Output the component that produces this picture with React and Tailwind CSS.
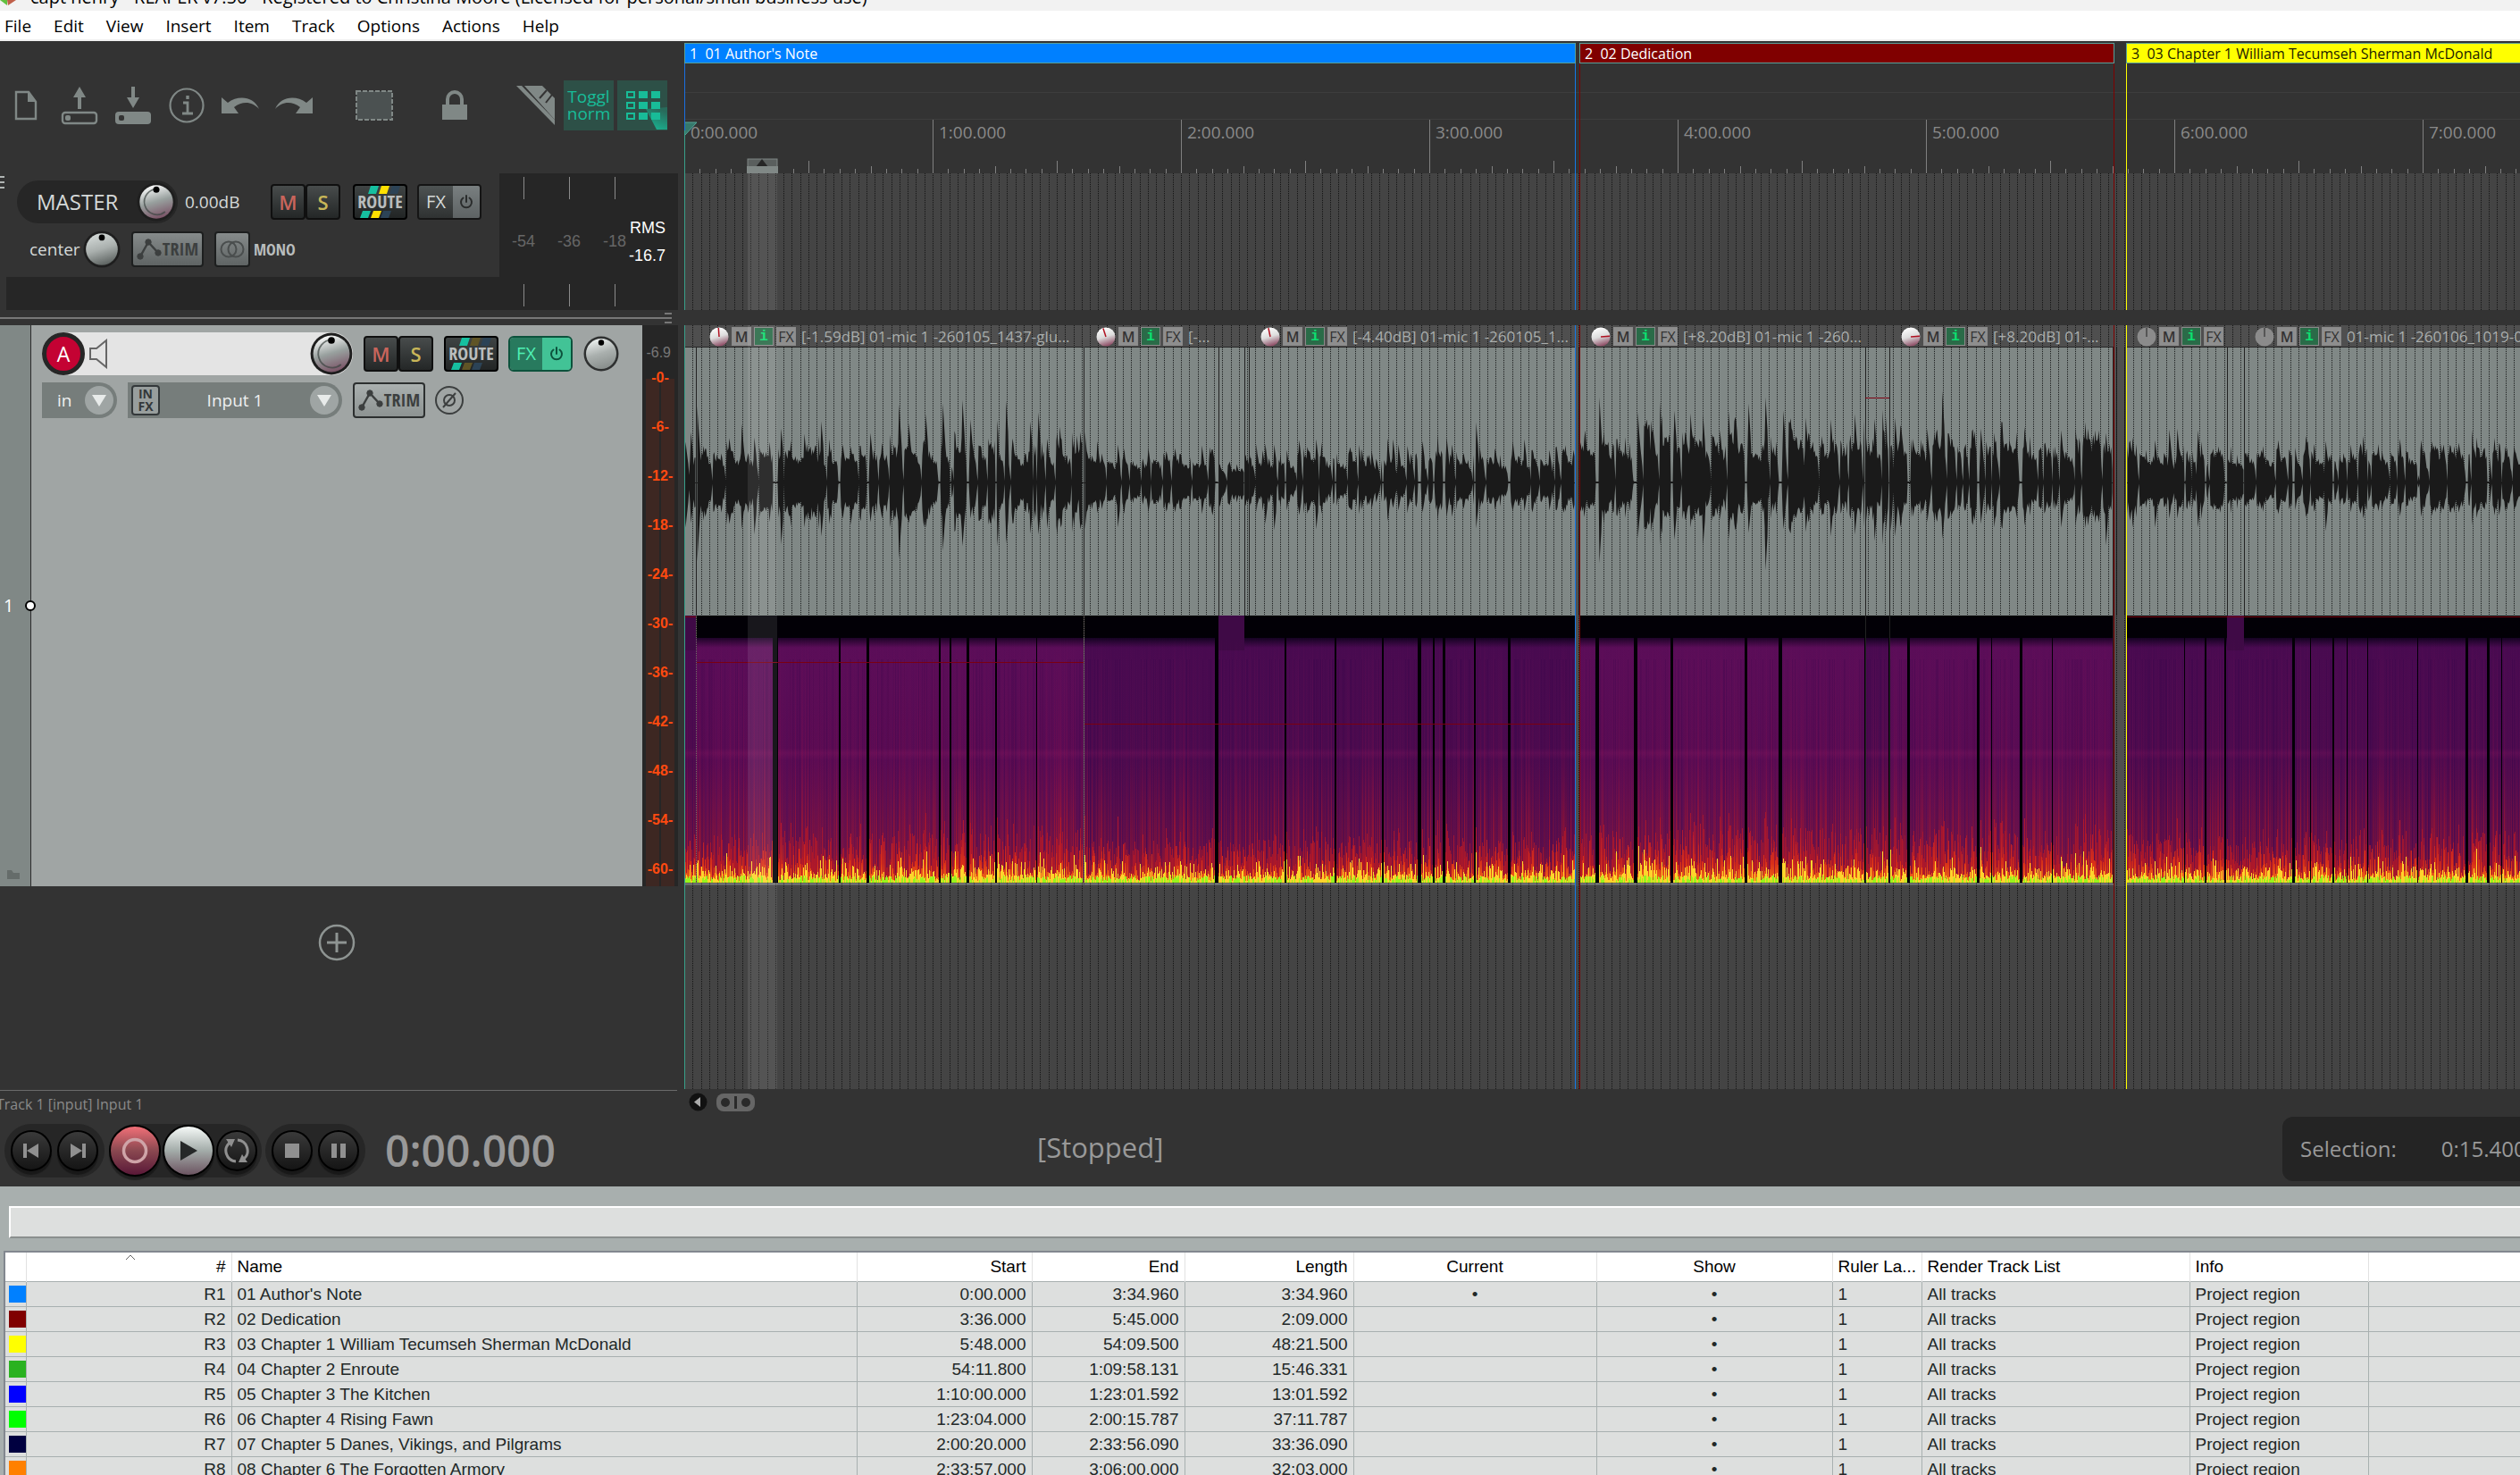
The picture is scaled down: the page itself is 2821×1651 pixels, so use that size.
import React, { useMemo } from 'react';

const UI_FONT = "font-['Open_Sans','Noto_Sans',sans-serif]";
const ARIAL_FONT = "font-['Liberation_Sans',Arial,sans-serif]";
const NARROW_FONT = "font-['Liberation_Sans_Narrow','Open_Sans_Condensed','DejaVu_Sans_Condensed',sans-serif]";

const PX_PER_MINUTE = 278;

const MENU = ['File', 'Edit', 'View', 'Insert', 'Item', 'Track', 'Options', 'Actions', 'Help'];

const REGIONS = [
    { id: 'R1', name: "01 Author's Note", start: '0:00.000', end: '3:34.960', length: '3:34.960', color: '#0080ff', current: true },
    { id: 'R2', name: '02 Dedication', start: '3:36.000', end: '5:45.000', length: '2:09.000', color: '#800000' },
    { id: 'R3', name: '03 Chapter 1 William Tecumseh Sherman McDonald', start: '5:48.000', end: '54:09.500', length: '48:21.500', color: '#ffff00' },
    { id: 'R4', name: '04 Chapter 2 Enroute', start: '54:11.800', end: '1:09:58.131', length: '15:46.331', color: '#2ab220' },
    { id: 'R5', name: '05 Chapter 3 The Kitchen', start: '1:10:00.000', end: '1:23:01.592', length: '13:01.592', color: '#0000ff' },
    { id: 'R6', name: '06 Chapter 4 Rising Fawn', start: '1:23:04.000', end: '2:00:15.787', length: '37:11.787', color: '#00ff00' },
    { id: 'R7', name: '07 Chapter 5 Danes, Vikings, and Pilgrams', start: '2:00:20.000', end: '2:33:56.090', length: '33:36.090', color: '#000040' },
    { id: 'R8', name: '08 Chapter 6 The Forgotten Armory', start: '2:33:57.000', end: '3:06:00.000', length: '32:03.000', color: '#ff8000' },
];

const REGION_BARS = [
    { number: 1, name: "01 Author's Note", left: 0, width: 998, color: '#0080ff', text: '#ffffff' },
    { number: 2, name: '02 Dedication', left: 1002, width: 599, color: '#800000', text: '#ffffff' },
    { number: 3, name: '03 Chapter 1 William Tecumseh Sherman McDonald', left: 1614, width: 900, color: '#ffff00', text: '#1c1c00' },
];

// Media items on the track, in pixels from the start of the project.
const ITEMS = [
    { x: 0, w: 13, up: 28, down: 28, tone: 'dark', fade: true },
    { x: 14, w: 432, up: 35, down: 36, tone: 'warm' },
    { x: 448, w: 150, up: 25, down: 24, tone: 'dark' },
    { x: 598, w: 29, up: 19, down: 23, tone: 'dark', fade: true },
    { x: 627, w: 370, up: 28, down: 24, tone: 'dark' },
    { x: 1002, w: 320, up: 46, down: 36, tone: 'warm' },
    { x: 1322, w: 27, up: 48, down: 40, tone: 'dark' },
    { x: 1349, w: 250, up: 46, down: 36, tone: 'warm' },
    { x: 1615, w: 112, up: 32, down: 28, tone: 'dark' },
    { x: 1727, w: 19, up: 30, down: 28, tone: 'dark', fade: true },
    { x: 1746, w: 700, up: 33, down: 27, tone: 'dark' },
];

const ITEM_HEADERS = [
    { x: 28, label: '[-1.59dB] 01-mic 1 -260105_1437-glu...', angle: -4 },
    { x: 461, label: '[-...', angle: -18 },
    { x: 645, label: '[-4.40dB] 01-mic 1 -260105_1...', angle: -12 },
    { x: 1015, label: '[+8.20dB] 01-mic 1 -260...', angle: 85 },
    { x: 1362, label: '[+8.20dB] 01-...', angle: 85 },
    { x: 1626, label: '', flat: true },
    { x: 1758, label: '01-mic 1 -260106_1019-01', flat: true },
];

const PEAKS = [
    [1, 45, 50], [7, 56, 45], [14, 85, 88], [64, 65, 52], [78, 50, 58], [108, 60, 69], [134, 54, 50], [153, 68, 60],
    [177, 42, 40], [186, 40, 47], [208, 55, 44], [221, 44, 40], [240, 87, 85], [251, 66, 45], [270, 76, 50], [289, 88, 76],
    [311, 92, 71], [320, 70, 40], [349, 87, 89], [360, 91, 68], [387, 68, 57], [396, 78, 58], [420, 62, 40], [439, 52, 30],
    [448, 56, 52], [462, 46, 34], [485, 42, 50], [519, 38, 33], [549, 38, 33], [579, 41, 35], [588, 39, 28], [599, 20, 27],
    [610, 23, 25], [618, 20, 22], [632, 34, 29], [641, 32, 24], [650, 43, 46], [660, 42, 53], [674, 36, 31], [688, 47, 36],
    [695, 30, 24], [707, 48, 52], [728, 41, 40], [745, 39, 28], [758, 37, 30], [769, 36, 30], [787, 49, 43], [793, 48, 28],
    [799, 42, 31], [813, 32, 22], [826, 46, 33], [841, 35, 30], [853, 50, 38], [859, 42, 38], [886, 67, 51], [890, 40, 30],
    [908, 34, 26], [927, 46, 32], [940, 48, 32], [949, 36, 33], [968, 36, 31], [995, 36, 30],
    [1008, 58, 30], [1024, 95, 90], [1067, 78, 62], [1082, 69, 56], [1108, 80, 64], [1126, 77, 50], [1140, 75, 70],
    [1159, 58, 40], [1175, 68, 46], [1191, 88, 56], [1210, 95, 98], [1230, 80, 52], [1255, 72, 55], [1283, 70, 60],
    [1310, 76, 58], [1321, 70, 60], [1332, 71, 65], [1349, 50, 68], [1355, 72, 60], [1391, 60, 44], [1408, 102, 63],
    [1441, 57, 44], [1451, 60, 46], [1466, 55, 50], [1500, 62, 48], [1541, 58, 50], [1571, 60, 48], [1591, 55, 70],
    [1621, 50, 50], [1646, 47, 50], [1662, 59, 40], [1671, 60, 40], [1694, 58, 50], [1717, 40, 30], [1784, 47, 35],
    [1802, 48, 38], [1837, 46, 54], [1865, 42, 33], [1900, 36, 30], [1944, 47, 38], [1969, 42, 30], [1984, 40, 28],
    [2006, 38, 30], [2038, 40, 32],
];

// Silent stretches, drawn as black columns through the spectrogram.
const GAPS = [
    [99, 6], [173, 2], [204, 3], [285, 2], [297, 2], [316, 3], [348, 2], [394, 1], [594, 4], [672, 2], [728, 2], [781, 2],
    [821, 4], [838, 2], [849, 3], [884, 2], [922, 3], [1020, 4], [1063, 4], [1104, 3], [1187, 3], [1225, 4], [1321, 1],
    [1348, 2], [1369, 3], [1447, 3], [1463, 1], [1495, 3], [1531, 1], [1679, 1], [1702, 2], [1724, 2], [1800, 3],
    [1820, 1], [1845, 2], [1861, 1], [1884, 1], [1940, 1], [1994, 3], [2018, 3], [2034, 1],
];

const METER_MARKS = ['-0-', '-6-', '-12-', '-18-', '-24-', '-30-', '-36-', '-42-', '-48-', '-54-', '-60-'];

function createRandom(seed) {
    let s = seed;
    return () => {
        s = (s * 1664525 + 1013904223) % 4294967296;
        return s / 4294967296;
    };
}

function buildEnvelope() {
    const rand = createRandom(7321);
    const env = [];

    ITEMS.forEach((item) => {
        let left = 0;
        let length = 0;
        let power = 1;
        let spike = 1;

        for (let i = 0; i < item.w; i += 1) {
            if (left <= 0) {
                length = 6 + Math.floor(rand() * 20);
                left = length;
                power = 0.8 + rand() * 0.45;
            }
            const t = 1 - left / length;
            const shape = left <= 1 ? 0.04 : left === 2 ? 0.35 : 1.05 - 0.5 * t;
            // spikes decay over a few columns so that each syllable gets a sharp edge
            spike = rand() < 0.14 ? 1.25 + rand() * 0.35 : Math.max(1, spike * 0.86);
            const jitter = (0.7 + rand() * 0.4) * spike;
            env[item.x + i] = [item.up * power * shape * jitter, item.down * power * shape * jitter * (0.9 + rand() * 0.15)];
            left -= 1;
        }
    });

    PEAKS.forEach(([x, up, down]) => {
        [[-1, 0.5], [0, 1], [1, 0.8], [2, 0.62]].forEach(([dx, k]) => {
            const e = env[x + dx];
            if (e) {
                env[x + dx] = [Math.max(e[0], up * k), Math.max(e[1], down * k)];
            }
        });
    });

    GAPS.forEach(([x, w]) => {
        for (let i = 0; i < w; i += 1) {
            if (env[x + i]) {
                env[x + i] = [0.5, 0.5];
            }
        }
    });

    return env;
}

function buildWave(env, mid) {
    return ITEMS.map((item) => {
        const top = [];
        const bottom = [];
        for (let x = item.x; x < item.x + item.w; x += 1) {
            const [u, d] = env[x];
            top.push(`${x + 0.5} ${(mid - u - 0.5).toFixed(1)}`);
            bottom.unshift(`${x + 0.5} ${(mid + d + 0.5).toFixed(1)}`);
        }
        return `M${top.join('L')}L${bottom.join('L')}Z`;
    }).join('');
}

function buildSpectrum(env, bottom) {
    const rand = createRandom(991);
    const silent = new Set();
    GAPS.forEach(([x, w]) => {
        for (let i = 0; i < w; i += 1) silent.add(x + i);
    });
    const out = { shade: '', weak: '', mid: '', strong: '', red: '', orange: '', yellow: '', green: '' };

    env.forEach((e, x) => {
        if (!e || silent.has(x)) return;
        const level = Math.min(1, (e[0] + e[1]) / 110);
        const r = rand();
        const col = (h) => `M${x} ${bottom}v-${Math.round(h)}h1V${bottom}z`;

        if (rand() < 0.25) out.shade += col(250);
        if (r < 0.45) out.weak += col(274);
        else if (r < 0.75) out.mid += col(274);
        else if (r > 0.97 - level * 0.2) out.strong += col(274);
        out.red += col(10 + rand() * 46 * (0.5 + level));
        out.orange += col(3 + rand() * rand() * 60 * (0.4 + level));
        out.yellow += col(2 + rand() * rand() * 32 * (0.4 + level));
        if (rand() < 0.5) out.green += col(3 + rand() * 5);
    });

    return out;
}

function gridPath(top, bottom) {
    let d = '';
    for (let i = 1; i < 400; i += 1) {
        d += `M${Math.round((i * PX_PER_MINUTE) / 30) + 0.5} ${top}V${bottom}`;
    }
    return d;
}

function Grid({ className }) {
    return (
        <svg className={className} width="100%" height="100%" aria-hidden="true">
            <path d={gridPath(0, 700)} stroke="#141414" strokeDasharray="1 1" shapeRendering="crispEdges" />
        </svg>
    );
}

function Knob({ size, tint = '#7a5266', light = '#ffffff', ring = '#1e1e1e', arc = true }) {
    const id = `knob${size}${tint.slice(1)}${light.slice(1)}`;
    return (
        <svg width={size} height={size} viewBox="0 0 40 40" className="shrink-0" aria-hidden="true">
            <defs>
                <linearGradient id={id} x1="0.3" y1="0" x2="0.6" y2="1">
                    <stop offset="0" stopColor={light} />
                    <stop offset="0.5" stopColor={arc ? '#98a09e' : '#aab0ae'} />
                    <stop offset="1" stopColor={tint} />
                </linearGradient>
            </defs>
            <circle cx="20" cy="20" r="19.5" fill={ring} />
            <circle cx="20" cy="20" r="17" fill={`url(#${id})`} />
            {arc ? <path d="M22 7A13 13 0 1 0 29 30" fill="none" stroke="#3c4442" strokeWidth="1.5" opacity="0.7" /> : null}
            <circle cx="20" cy="7.5" r="3.2" fill="#000" />
        </svg>
    );
}

function PowerIcon({ color }) {
    return (
        <svg width="18" height="18" viewBox="0 0 18 18" fill="none" stroke={color} strokeWidth="2" strokeLinecap="round" aria-hidden="true">
            <path d="M9 2v7M5.5 4.5a6 6 0 1 0 7 0" />
        </svg>
    );
}

function EnvelopeIcon() {
    return (
        <svg width="28" height="26" viewBox="0 0 28 26" fill="#3c3f3f" stroke="#3c3f3f" aria-hidden="true">
            <path d="M4 21L13 5L24 17" fill="none" strokeWidth="2.5" />
            <circle cx="4" cy="21" r="3.2" />
            <circle cx="13" cy="5" r="3.2" />
            <circle cx="24" cy="17" r="3.2" />
        </svg>
    );
}

function RouteButton({ bright }) {
    const yellow = bright ? '#ffe000' : '#5f5426';
    return (
        <button
            type="button"
            aria-label="Route"
            className={`relative flex h-10 w-[61px] items-center justify-center overflow-hidden rounded-sm border-2 border-black bg-linear-to-b from-[#3f4444] to-[#222525] text-[20px] font-bold text-[#b9bdbd] ${NARROW_FONT}`}
        >
            <svg className="absolute inset-0" width="57" height="36" viewBox="0 0 57 36" aria-hidden="true">
                <path d="M18 0h9l-3 9h-9z M9 28h9l-3 8H6z" fill="#16c0a0" />
                <path d="M30 0h9l-3 9h-9z M21 28h9l-3 8h-9z" fill={yellow} />
                <path d="M42 0h9l-3 9h-9z M32 28h9l-3 8h-9z" fill="#2c4356" />
            </svg>
            <span className="relative leading-none">ROUTE</span>
        </button>
    );
}

function MuteSolo() {
    const base = `h-10 w-[39px] rounded-sm border-2 border-[#101010] bg-linear-to-b from-[#484c4c] to-[#242727] text-[22px] font-semibold leading-none ${UI_FONT}`;
    return (
        <div className="flex">
            <button type="button" aria-label="Mute" className={`${base} text-[#c9655c]`}>M</button>
            <button type="button" aria-label="Solo" className={`${base} text-[#c8b658]`}>S</button>
        </div>
    );
}

function TrimButton({ className }) {
    return (
        <button
            type="button"
            className={`flex h-10 w-[81px] items-center justify-center gap-px rounded-sm border-2 text-[20px] text-[#3c3f3f] ${NARROW_FONT} ${className}`}
        >
            <EnvelopeIcon />
            TRIM
        </button>
    );
}

const TOOL_BUTTON = 'flex h-14 w-14 shrink-0 items-center justify-center';

function Toolbar() {
    return (
        <div className="flex h-[148px] items-start gap-1 pl-px pt-[44px] text-[#808886]">
            <button type="button" aria-label="New project" className={TOOL_BUTTON}>
                <svg width="26" height="34" viewBox="0 0 26 34" fill="none">
                    <path d="M2 2h14l8 11v19H2z" stroke="currentColor" strokeWidth="2.4" />
                    <path d="M15 1l10 12H15z" fill="currentColor" />
                </svg>
            </button>
            <button type="button" aria-label="Open project" className={TOOL_BUTTON}>
                <svg width="42" height="46" viewBox="0 0 42 46" fill="none">
                    <path d="M21 2l7 12h-5v13h-4V14h-5z" fill="currentColor" />
                    <rect x="2" y="31" width="38" height="12" rx="3" stroke="currentColor" strokeWidth="2.4" />
                    <rect x="5" y="34" width="6" height="6" rx="2" fill="currentColor" />
                </svg>
            </button>
            <button type="button" aria-label="Save project" className={TOOL_BUTTON}>
                <svg width="42" height="46" viewBox="0 0 42 46" fill="none">
                    <path d="M21 26l7-12h-5V2h-4v12h-5z" fill="currentColor" />
                    <rect x="1" y="30" width="40" height="14" rx="4" fill="currentColor" />
                    <rect x="5" y="34" width="6" height="6" rx="2" fill="#333" />
                </svg>
            </button>
            <button type="button" aria-label="Project settings" className={TOOL_BUTTON}>
                <svg width="40" height="40" viewBox="0 0 40 40" fill="none" stroke="currentColor">
                    <circle cx="20" cy="20" r="18.5" strokeWidth="2.2" />
                    <path d="M16 17h5v11M15 29h12" strokeWidth="2.8" />
                    <path d="M21 9v4" strokeWidth="3.4" />
                </svg>
            </button>
            <button type="button" aria-label="Undo" className={TOOL_BUTTON}>
                <svg width="44" height="20" viewBox="0 0 44 20" fill="currentColor">
                    <path d="M1 1l7 6C20-2 37 0 43 14 35 5 24 5 15 12l5 7H1z" />
                </svg>
            </button>
            <button type="button" aria-label="Redo" className={TOOL_BUTTON}>
                <svg width="44" height="20" viewBox="0 0 44 20" fill="currentColor">
                    <path d="M43 1l-7 6C24-2 7 0 1 14 9 5 20 5 29 12l-5 7h19z" />
                </svg>
            </button>
            <button type="button" aria-label="Item grouping" className={`${TOOL_BUTTON} ml-[30px]`}>
                <svg width="42" height="34" viewBox="0 0 42 34">
                    <rect x="1" y="1" width="40" height="32" fill="#4b5151" stroke="currentColor" strokeWidth="2" strokeDasharray="5 2" />
                </svg>
            </button>
            <button type="button" aria-label="Locking" className={`${TOOL_BUTTON} ml-[30px]`}>
                <svg width="30" height="34" viewBox="0 0 30 34">
                    <rect x="1" y="16" width="28" height="17" fill="currentColor" />
                    <path d="M7 17v-7a8 8 0 0 1 16 0v7" fill="none" stroke="currentColor" strokeWidth="4" />
                </svg>
            </button>
            <button type="button" aria-label="Custom action" className={`${TOOL_BUTTON} ml-[30px]`}>
                <svg width="44" height="46" viewBox="0 0 44 46">
                    <path d="M10 1h20l14 14v24z" fill="currentColor" />
                    <path d="M1 1h6l37 38v6z" fill="currentColor" />
                    <path d="M35 6l-8 9M41 11l-7 9" stroke="#333" strokeWidth="2" />
                </svg>
            </button>
            <button
                type="button"
                className="flex h-14 w-14 shrink-0 flex-col items-center justify-center bg-[#2d5047] text-[19px] leading-[19px] text-[#18bc98]"
            >
                <span>Toggl</span>
                <span>norm</span>
            </button>
            <button type="button" aria-label="Grid" className={`${TOOL_BUTTON} bg-[#2d5047]`}>
                <svg width="56" height="56" viewBox="0 0 56 56" fill="#18bc98">
                    <defs>
                        <linearGradient id="glow" x1="0" y1="1" x2="0.4" y2="0">
                            <stop offset="0" stopColor="#18bc98" />
                            <stop offset="1" stopColor="#18bc98" stopOpacity="0.25" />
                        </linearGradient>
                    </defs>
                    <path d="M32 32L44 55h12V30z" fill="url(#glow)" />
                    {[12, 24, 36].map((y) => (
                        <g key={y}>
                            <rect x="11" y={y + 1} width="8" height="6" fill="none" stroke="#18bc98" strokeWidth="2" />
                            <rect x="24" y={y} width="10" height="8" />
                            <rect x="38" y={y} width="10" height="8" />
                        </g>
                    ))}
                </svg>
            </button>
        </div>
    );
}

function MasterPanel() {
    return (
        <div className="flex h-[153px] text-[#d5d9d8]">
            <div className="flex w-[559px] flex-col">
                <div className="flex h-[64px] items-center">
                    <svg width="5" height="16" viewBox="0 0 5 16" className="-mt-11" aria-hidden="true">
                        <path d="M0 2h5M0 8h5M0 14h5" stroke="#b0b4b3" strokeWidth="2" />
                    </svg>
                    <div className="ml-[14px] flex h-12 w-[180px] items-center justify-between rounded-full bg-[#262626] pl-[22px] pr-[2px]">
                        <span className="text-[24px]">MASTER</span>
                        <Knob size={44} />
                    </div>
                    <span className="ml-2 w-[96px] text-[19px]">0.00dB</span>
                    <MuteSolo />
                    <div className="ml-[14px]">
                        <RouteButton bright />
                    </div>
                    <div className="ml-[11px] flex h-10 w-[72px] overflow-hidden rounded-sm border-2 border-[#151515]">
                        <button type="button" className="flex-1 bg-linear-to-b from-[#4e5353] to-[#2f3232] text-[20px]">FX</button>
                        <button type="button" aria-label="Master FX enabled" className="flex w-[30px] items-center justify-center bg-linear-to-b from-[#797f80] to-[#5e6364]">
                            <PowerIcon color="#2a2c2c" />
                        </button>
                    </div>
                </div>
                <div className="mb-[10px] flex h-[42px] items-center">
                    <span className="ml-[33px] w-[60px] text-[19px]">center</span>
                    <Knob size={42} light="#d4dad8" tint="#5b615f" arc={false} />
                    <TrimButton className="ml-3 border-[#1d1f1f] bg-linear-to-b from-[#868b8b] to-[#5f6464]" />
                    <button
                        type="button"
                        aria-label="Mono"
                        className="ml-3 flex h-10 w-10 items-center justify-center rounded-sm border-2 border-[#1d1f1f] bg-linear-to-b from-[#868b8b] to-[#5f6464]"
                    >
                        <svg width="28" height="20" viewBox="0 0 28 20" fill="none" stroke="#4a4e4e" strokeWidth="2">
                            <circle cx="10" cy="10" r="8.5" />
                            <circle cx="18" cy="10" r="8.5" />
                        </svg>
                    </button>
                    <span className={`ml-1 text-[18px] font-bold text-[#b9bdbd] ${NARROW_FONT}`}>MONO</span>
                </div>
                <div className="ml-[7px] flex-1 bg-[#262626]" />
            </div>
            <div className={`flex w-[200px] flex-col justify-between bg-[#262626] py-1 text-[18px] ${ARIAL_FONT}`}>
                <div className="flex h-[25px] gap-[50px] pl-[27px]">
                    <i className="w-px bg-[#8a8a8a]" />
                    <i className="w-px bg-[#8a8a8a]" />
                    <i className="w-px bg-[#8a8a8a]" />
                </div>
                <div className="flex items-center pl-[14px] text-[#666]">
                    <span className="w-[51px]">-54</span>
                    <span className="w-[51px]">-36</span>
                    <span className="w-[26px]">-18</span>
                    <span className="flex w-[44px] flex-col text-right leading-[31px] text-white">
                        <span>RMS</span>
                        <span>-16.7</span>
                    </span>
                </div>
                <div className="flex h-[25px] gap-[50px] pl-[27px]">
                    <i className="w-px bg-[#8a8a8a]" />
                    <i className="w-px bg-[#8a8a8a]" />
                    <i className="w-px bg-[#8a8a8a]" />
                </div>
            </div>
        </div>
    );
}

function Splitter() {
    return (
        <div className="flex h-[17px] flex-col items-end justify-center gap-[3px] pr-[14px]">
            <div className="h-[2px] w-2 bg-[#777]" />
            <div className="h-[2px] w-full bg-[#777]" />
            <div className="h-[2px] w-2 bg-[#777]" />
        </div>
    );
}

function DropArrow() {
    return (
        <span className="flex h-8 w-8 items-center justify-center rounded-full bg-[#9fa5a4]">
            <svg width="16" height="13" viewBox="0 0 16 13" aria-hidden="true">
                <path d="M0 0h16L8 13z" fill="#e8ebea" />
            </svg>
        </span>
    );
}

function TrackPanel() {
    return (
        <div className="flex h-[628px]">
            <div className="relative flex w-[35px] shrink-0 items-center border-r border-[#2c2c2c] bg-[#808886] pl-1 text-[20px] text-white">
                1
                <span className="absolute -right-[6px] h-3 w-3 rounded-full border-2 border-black bg-white" />
                <svg className="absolute bottom-2 left-2" width="14" height="12" viewBox="0 0 14 12" aria-hidden="true">
                    <path d="M0 2h5l2 3h7v7H0z" fill="#656c6a" />
                </svg>
            </div>
            <div className="flex w-[684px] flex-col gap-2 bg-[#a0a5a4] px-3 pt-2">
                <div className="flex h-12 items-center">
                    <div className="flex h-12 w-[348px] items-center rounded-full bg-[#e4e4e4]">
                        <button type="button" aria-label="Record arm" className="h-12 w-12 shrink-0 rounded-full border-[5px] border-[#262626] bg-[#c40233] text-[23px] leading-none text-white">
                            A
                        </button>
                        <button type="button" aria-label="Record monitoring" className="ml-1 shrink-0">
                            <svg width="24" height="34" viewBox="0 0 24 34" fill="none" stroke="#666" strokeWidth="2">
                                <path d="M2 11h7L20 2v30L9 23H2z" />
                            </svg>
                        </button>
                        <input aria-label="Track name" className="min-w-0 flex-1 bg-transparent outline-none" />
                        <Knob size={48} />
                    </div>
                    <div className="ml-3">
                        <MuteSolo />
                    </div>
                    <div className="ml-3">
                        <RouteButton />
                    </div>
                    <div className="ml-[11px] flex h-10 w-[72px] overflow-hidden rounded-md border-2 border-[#0c523c]">
                        <button type="button" className="flex-1 bg-[#287a5e] text-[20px] leading-none text-[#4ff0b4]">FX</button>
                        <button type="button" aria-label="Track FX enabled" className="flex w-[32px] items-center justify-center bg-[#42c396]">
                            <PowerIcon color="#0c523c" />
                        </button>
                    </div>
                    <div className="ml-3 flex">
                        <Knob size={40} light="#eef2f1" tint="#878d8b" ring="#2e3030" arc={false} />
                    </div>
                </div>
                <div className="flex h-10 items-center text-[19px] text-[#eef0f0]">
                    <button type="button" className="flex h-10 w-[84px] items-center justify-between rounded-l-md rounded-r-full bg-[#767d7b] pl-[17px] pr-1">
                        in
                        <DropArrow />
                    </button>
                    <div className="ml-3 flex h-10 w-[240px] items-center rounded-l-md rounded-r-full bg-[#767d7b] pl-1 pr-1">
                        <button
                            type="button"
                            className={`flex h-[34px] w-8 flex-col items-center justify-center rounded-sm border-2 border-[#33383a] bg-[#989e9d] text-[14px] font-bold leading-[14px] text-[#33383a] ${UI_FONT}`}
                        >
                            <span>IN</span>
                            <span>FX</span>
                        </button>
                        <button type="button" className="flex flex-1 items-center">
                            <span className="flex-1">Input 1</span>
                            <DropArrow />
                        </button>
                    </div>
                    <TrimButton className="ml-3 border-[#2c2f2f] bg-linear-to-b from-[#aab0af] to-[#8d9392]" />
                    <button type="button" aria-label="Phase" className="ml-[11px] flex h-8 w-8 items-center justify-center rounded-full border-2 border-[#3c3f3f]">
                        <svg width="20" height="20" viewBox="0 0 20 20" fill="none" stroke="#3c3f3f" strokeWidth="2">
                            <circle cx="10" cy="10" r="6" />
                            <path d="M3 18L17 2" />
                        </svg>
                    </button>
                </div>
            </div>
            <div className={`relative w-10 shrink-0 bg-[#262626] text-[16px] font-bold ${ARIAL_FONT}`}>
                <div className="absolute inset-x-1 bottom-0 top-[60px] flex gap-[2px]">
                    <div className="flex-1 bg-[#3d2722]" />
                    <div className="flex-1 bg-[#3d2722]" />
                </div>
                <div className="relative flex h-[31px] justify-end pr-2 pt-[21px] font-normal leading-5 text-[#777]">-6.9</div>
                {METER_MARKS.map((mark) => (
                    <div key={mark} className="relative flex h-[55px] items-center justify-center text-[#ff4a10]">
                        {mark}
                    </div>
                ))}
            </div>
        </div>
    );
}

function Ruler() {
    const ticks = [];
    for (let i = 0; i < 300; i += 1) {
        const x = Math.round((i * PX_PER_MINUTE) / 16) + 0.5;
        const top = i % 16 === 0 ? 88 : i % 8 === 0 ? 134 : i % 4 === 0 ? 140 : 143;
        ticks.push(`M${x} ${top}V148`);
    }
    return (
        <div className="relative h-[148px] overflow-hidden">
            <svg className="absolute inset-0" width="100%" height="148" aria-hidden="true">
                <path d="M0 57.5H3000M0 87.5H3000" stroke="#3d3d3d" />
                <path d={ticks.join('')} stroke="#808080" shapeRendering="crispEdges" />
                <path d="M0 91h14L0 106z" fill="#36796c" stroke="#55a697" />
                <rect x="71" y="132" width="33" height="9" fill="#5a5f5e" stroke="#808886" />
                <path d="M80 141l7-9 7 9z" fill="#262626" />
                <rect x="70" y="140" width="35" height="8" fill="#808886" />
            </svg>
            {REGION_BARS.map((bar) => (
                <div
                    key={bar.number}
                    className="absolute top-[2px] h-[23px] whitespace-pre border border-[#58a09a] pl-[5px] text-[16px] leading-[22px]"
                    style={{ left: bar.left, width: bar.width, backgroundColor: bar.color, color: bar.text }}
                >
                    {`${bar.number}  ${bar.name}`}
                </div>
            ))}
            {[0, 1, 2, 3, 4, 5, 6, 7].map((minute) => (
                <span
                    key={minute}
                    className="absolute top-[88px] text-[19px] leading-[28px] text-[#8a8a8a]"
                    style={{ left: minute * PX_PER_MINUTE + 7 }}
                >
                    {`${minute}:00.000`}
                </span>
            ))}
        </div>
    );
}

function ItemHeader({ item }) {
    const chip = 'flex h-[21px] w-[22px] items-center justify-center border border-[#8a8a8a] text-[16px] leading-none';
    return (
        <div className="absolute top-0 flex h-[25px] items-center gap-[3px] whitespace-nowrap text-[17px] text-[#a9adac]" style={{ left: item.x }}>
            <svg width="22" height="22" viewBox="0 0 22 22" aria-hidden="true">
                <circle cx="11" cy="11" r="10.5" fill={item.flat ? '#8b8b8b' : 'url(#itemknob)'} />
                <path d="M11 11V1" stroke={item.flat ? '#444' : '#b01020'} strokeWidth="1.5" transform={`rotate(${item.angle || 0} 11 11)`} />
            </svg>
            <button type="button" aria-label="Mute item" className={`${chip} bg-[#8e8e8e] font-semibold text-[#333]`}>M</button>
            <button type="button" aria-label="Item notes" className={`${chip} bg-[#2a6b48] font-['Liberation_Mono',monospace] font-bold text-[#0be070]`}>i</button>
            <button type="button" aria-label="Item FX" className={`${chip} bg-[#8e8e8e] text-[#333]`}>FX</button>
            {item.label ? <span className="ml-[3px]">{item.label}</span> : null}
        </div>
    );
}

function TrackLane() {
    const { wave, spectrum } = useMemo(() => {
        const env = buildEnvelope();
        return { wave: buildWave(env, 176), spectrum: buildSpectrum(env, 624) };
    }, []);

    return (
        <div className="relative h-[628px] overflow-hidden bg-[#4f4f4f]">
            <Grid className="absolute inset-0" />
            <svg className="absolute inset-0" width="100%" height="628" aria-hidden="true">
                <defs>
                    <linearGradient id="itemknob" x1="0.3" y1="0" x2="0.6" y2="1">
                        <stop offset="0" stopColor="#fff" />
                        <stop offset="0.5" stopColor="#ddd" />
                        <stop offset="1" stopColor="#8a4660" />
                    </linearGradient>
                    <linearGradient id="warm" gradientUnits="userSpaceOnUse" x1="0" y1="350" x2="0" y2="624">
                        <stop offset="0" stopColor="#1e0428" />
                        <stop offset="0.04" stopColor="#5a0d58" />
                        <stop offset="0.45" stopColor="#560b54" />
                        <stop offset="0.47" stopColor="#640f58" />
                        <stop offset="0.5" stopColor="#560b54" />
                        <stop offset="0.85" stopColor="#5e1050" />
                        <stop offset="1" stopColor="#80143c" />
                    </linearGradient>
                    <linearGradient id="dark" gradientUnits="userSpaceOnUse" x1="0" y1="350" x2="0" y2="624">
                        <stop offset="0" stopColor="#150322" />
                        <stop offset="0.04" stopColor="#480a50" />
                        <stop offset="0.45" stopColor="#480a4f" />
                        <stop offset="0.47" stopColor="#580d54" />
                        <stop offset="0.5" stopColor="#480a4f" />
                        <stop offset="0.85" stopColor="#540d50" />
                        <stop offset="1" stopColor="#74123e" />
                    </linearGradient>
                    <linearGradient id="streak" gradientUnits="userSpaceOnUse" x1="0" y1="350" x2="0" y2="624">
                        <stop offset="0" stopColor="#7a1060" stopOpacity="0" />
                        <stop offset="0.1" stopColor="#7a1058" stopOpacity="0.2" />
                        <stop offset="0.5" stopColor="#a01048" stopOpacity="0.35" />
                        <stop offset="0.75" stopColor="#c01824" stopOpacity="0.75" />
                        <stop offset="0.95" stopColor="#d02018" stopOpacity="1" />
                    </linearGradient>
                    <linearGradient id="ember" gradientUnits="userSpaceOnUse" x1="0" y1="570" x2="0" y2="624">
                        <stop offset="0" stopColor="#b01830" />
                        <stop offset="0.6" stopColor="#d83018" />
                        <stop offset="1" stopColor="#f07018" />
                    </linearGradient>
                </defs>
                <g shapeRendering="crispEdges">
                    {ITEMS.map((item) => (
                        <g key={item.x}>
                            <rect x={item.x} y="25" width={item.w + 1} height="300" fill="#808886" />
                            <rect x={item.x} y="325" width={item.w + 1} height="25" fill={item.fade ? '#3f0a46' : '#020006'} />
                            <rect x={item.x} y="350" width={item.w + 1} height="274" fill={item.tone === 'warm' ? 'url(#warm)' : 'url(#dark)'} />
                            {item.fade ? <rect x={item.x} y="350" width={item.w + 1} height="14" fill="#3f0a46" /> : null}
                            <path d={`M${item.x} 24.5h${item.w + 1}`} stroke="#262626" />
                            <path d={`M${item.x} 625.5h${item.w + 1}`} stroke="#8b918f" />
                        </g>
                    ))}
                    <svg y="25" height="300" width="100%">
                        <path d={gridPath(0, 300)} stroke="#1c1e1e" strokeDasharray="1 1" />
                    </svg>
                </g>
                <path d={wave} fill="#1a1a1a" />
                <path d="M0 176.5H997M1002 176.5H1599M1615 176.5H3000" stroke="#1a1a1a" />
                <g shapeRendering="crispEdges">
                    <path d={spectrum.shade} fill="#1a0440" opacity="0.12" />
                    <path d={spectrum.weak} fill="url(#streak)" opacity="0.15" />
                    <path d={spectrum.mid} fill="url(#streak)" opacity="0.36" />
                    <path d={spectrum.strong} fill="url(#streak)" opacity="0.7" />
                    <path d={spectrum.red} fill="#c01a24" opacity="0.65" />
                    <path d={spectrum.orange} fill="url(#ember)" />
                    <path d={spectrum.yellow} fill="#ffd42c" />
                    <path d={spectrum.green} fill="#98f41c" />
                    {GAPS.map(([x, w]) => (
                        <rect key={x} x={x} y="350" width={w} height="274" fill="#020006" />
                    ))}
                    <path d="M13.5 25V350M447.5 25V350M598.5 25V325M627.5 25V325M632.5 25V325M1322.5 25V625M1349.5 25V625M1599.5 25V625M1727.5 25V325M1746.5 25V325" stroke="#222" />
                    <path d="M447.5 325V625M13.5 325V625" stroke="#77706a" strokeDasharray="1 1" />
                    <path d="M14 377.5H447M448 446.5H997M1322 81.5H1349M1615 326.5H3000M0 326.5H13" stroke="#7a0010" />
                </g>
            </svg>
            {ITEM_HEADERS.map((item) => (
                <ItemHeader key={item.x} item={item} />
            ))}
        </div>
    );
}

function Arrange() {
    return (
        <div className="relative min-w-0 flex-1 overflow-hidden">
            <Ruler />
            <div className="h-[153px] bg-[#444]">
                <Grid />
            </div>
            <div className="h-[17px] bg-[#333]" />
            <TrackLane />
            <div className="h-[227px] bg-[#444]">
                <Grid />
            </div>
            <div className="flex h-[29px] items-center gap-[10px] pl-[5px]">
                <button type="button" aria-label="Scroll left">
                    <svg width="21" height="21" viewBox="0 0 21 21">
                        <circle cx="10.5" cy="10.5" r="10" fill="#111" />
                        <path d="M13 5v11l-7-5.5z" fill="#aaa" />
                    </svg>
                </button>
                <button type="button" aria-label="Horizontal zoom">
                    <svg width="43" height="20" viewBox="0 0 43 20">
                        <rect width="43" height="20" rx="8" fill="#666" />
                        <circle cx="10" cy="10" r="5" fill="#2a2a2a" />
                        <circle cx="33" cy="10" r="5" fill="#2a2a2a" />
                        <path d="M21.5 3v14" stroke="#2a2a2a" strokeWidth="3" />
                    </svg>
                </button>
            </div>
            <svg className="pointer-events-none absolute inset-x-0 top-0" width="100%" height="1173" aria-hidden="true">
                <rect x="71" y="148" width="33" height="153" fill="#fff" opacity="0.09" />
                <rect x="71" y="318" width="33" height="855" fill="#fff" opacity="0.09" />
                <g shapeRendering="crispEdges">
                    <path d="M0.5 25V100" stroke="#1a6fe0" />
                    <path d="M0.5 100V1173" stroke="#38a08a" />
                    <path d="M997.5 25V1173" stroke="#1478e8" />
                    <path d="M1002.5 25V1173M1600.5 25V1173" stroke="#800000" />
                    <path d="M1614.5 25V1173" stroke="#ffff00" />
                    <path d="M0 301h3000v17H0z" fill="#333" />
                </g>
            </svg>
        </div>
    );
}

function TransportButton({ label, children, kind = 'dark' }) {
    const styles = {
        dark: 'h-[46px] w-[46px] bg-linear-to-b from-[#3a3a3a] to-[#151515]',
        record: 'h-[58px] w-[58px] bg-linear-to-b from-[#f27078] via-[#8a4850] to-[#5a1838]',
        play: 'h-[58px] w-[58px] bg-linear-to-b from-[#f6faf8] via-[#a3aca9] to-[#6c5562]',
    };
    return (
        <button
            type="button"
            aria-label={label}
            className={`flex shrink-0 items-center justify-center rounded-full border-2 border-black text-[#909090] shadow-[0_4px_1px_rgba(0,0,0,0.35)] ${styles[kind]}`}
        >
            {children}
        </button>
    );
}

function Transport() {
    return (
        <div className="flex h-[80px] items-center">
            <div className="ml-[5px] flex h-[60px] w-[112px] items-center justify-center gap-[6px] rounded-full bg-[#262626]">
                <TransportButton label="Go to start">
                    <svg width="18" height="16" viewBox="0 0 18 16" fill="currentColor"><path d="M0 0h4v16H0zM17 0v16L4 8z" /></svg>
                </TransportButton>
                <TransportButton label="Go to end">
                    <svg width="18" height="16" viewBox="0 0 18 16" fill="currentColor"><path d="M14 0h4v16h-4zM1 0v16l13-8z" /></svg>
                </TransportButton>
            </div>
            <div className="ml-[5px] flex h-[60px] w-[171px] items-center gap-[2px] rounded-full bg-[#262626]">
                <TransportButton label="Record" kind="record">
                    <svg width="30" height="30" viewBox="0 0 30 30"><circle cx="15" cy="15" r="12.5" fill="none" stroke="#cfa4a8" strokeWidth="3.5" /></svg>
                </TransportButton>
                <TransportButton label="Play" kind="play">
                    <svg width="22" height="22" viewBox="0 0 22 22"><path d="M2 0v22l19-11z" fill="#262828" /></svg>
                </TransportButton>
                <TransportButton label="Repeat">
                    <svg width="30" height="30" viewBox="0 0 30 30" fill="none" stroke="currentColor" strokeWidth="3">
                        <path d="M14 27A12 12 0 0 1 7 6M16 3a12 12 0 0 1 7 21" />
                        <path d="M3 2h10l-4 9zM27 28H17l4-9z" fill="currentColor" stroke="none" />
                    </svg>
                </TransportButton>
            </div>
            <div className="ml-[4px] flex h-[60px] w-[112px] items-center justify-center gap-[6px] rounded-full bg-[#262626]">
                <TransportButton label="Stop">
                    <svg width="16" height="16" viewBox="0 0 16 16"><rect width="16" height="16" fill="currentColor" /></svg>
                </TransportButton>
                <TransportButton label="Pause">
                    <svg width="16" height="16" viewBox="0 0 16 16" fill="currentColor"><path d="M0 0h6v16H0zM10 0h6v16h-6z" /></svg>
                </TransportButton>
            </div>
            <span className="ml-[22px] w-[730px] shrink-0 text-[48px] font-semibold leading-none text-[#999]">0:00.000</span>
            <span className="-mt-2 text-[31px] leading-none text-[#999]">[Stopped]</span>
            <div className="-mt-1 ml-auto flex h-[72px] w-[266px] shrink-0 items-center gap-[50px] overflow-hidden whitespace-nowrap rounded-l-xl bg-[#242424] pl-5 text-[24px] text-[#999]">
                <span>Selection:</span>
                <span>0:15.400</span>
            </div>
        </div>
    );
}

function RegionTable() {
    const head = 'border-r border-[#e2e2e2] px-[6px] font-normal';
    const cell = 'truncate border-r border-[#a8b0b0] px-[6px]';

    return (
        <div className="ml-1 min-h-0 flex-1 overflow-hidden border-l-2 border-t-2 border-[#82878f] bg-[#dddfde]">
            <table className={`w-full table-fixed border-collapse text-[19px] leading-none ${ARIAL_FONT}`}>
                <colgroup>
                    <col className="w-[23px]" />
                    <col className="w-[230px]" />
                    <col className="w-[700px]" />
                    <col className="w-[196px]" />
                    <col className="w-[171px]" />
                    <col className="w-[189px]" />
                    <col className="w-[272px]" />
                    <col className="w-[264px]" />
                    <col className="w-[100px]" />
                    <col className="w-[300px]" />
                    <col className="w-[200px]" />
                    <col />
                </colgroup>
                <thead>
                    <tr className="h-[32px] bg-white text-black">
                        <th className={head} aria-label="Color" />
                        <th className={`${head} relative text-right`}>
                            <svg className="absolute left-[110px] top-[2px]" width="12" height="7" viewBox="0 0 12 7" fill="none" stroke="#666" aria-hidden="true">
                                <path d="M1 6l5-5 5 5" />
                            </svg>
                            #
                        </th>
                        <th className={`${head} text-left`}>Name</th>
                        <th className={`${head} text-right`}>Start</th>
                        <th className={`${head} text-right`}>End</th>
                        <th className={`${head} text-right`}>Length</th>
                        <th className={`${head} text-center`}>Current</th>
                        <th className={`${head} text-center`}>Show</th>
                        <th className={`${head} whitespace-nowrap text-left`}>Ruler La...</th>
                        <th className={`${head} text-left`}>Render Track List</th>
                        <th className={`${head} text-left`}>Info</th>
                        <th aria-label="Spacer" />
                    </tr>
                </thead>
                <tbody className="text-[#222828]">
                    {REGIONS.map((region) => (
                        <tr key={region.id} className="h-[28px] border-y border-[#a8b0b0]">
                            <td className="border-r border-[#a8b0b0] pl-1">
                                <div className="h-[19px]" style={{ backgroundColor: region.color }} />
                            </td>
                            <td className={`${cell} text-right`}>{region.id}</td>
                            <td className={cell}>{region.name}</td>
                            <td className={`${cell} text-right`}>{region.start}</td>
                            <td className={`${cell} text-right`}>{region.end}</td>
                            <td className={`${cell} text-right`}>{region.length}</td>
                            <td className={`${cell} text-center`}>{region.current ? '•' : ''}</td>
                            <td className={`${cell} text-center`}>•</td>
                            <td className={cell}>1</td>
                            <td className={cell}>All tracks</td>
                            <td className={cell}>Project region</td>
                            <td />
                        </tr>
                    ))}
                </tbody>
            </table>
        </div>
    );
}

export default function App() {
    return (
        <div className={`flex h-screen flex-col overflow-hidden bg-[#333] ${UI_FONT}`}>
            <header className="flex h-3 shrink-0 overflow-hidden bg-[#f2f2f2] text-[20px] leading-[20px] text-black">
                <svg width="18" height="6" viewBox="0 0 18 6" className="shrink-0" aria-hidden="true">
                    <path d="M0 0h8v6z" fill="#62c040" />
                    <path d="M8 0h10L9 6z" fill="#c0604a" />
                </svg>
                <span className="-mt-[13px] ml-4 whitespace-nowrap">
                    capt henry - REAPER v7.56 - Registered to Christina Moore (Licensed for personal/small business use)
                </span>
            </header>
            <nav className="flex h-[34px] shrink-0 items-center gap-[25px] border-b-2 border-[#f0f0f0] bg-white pl-[5px] pt-[2px] text-[19px] text-black">
                {MENU.map((entry) => (
                    <button key={entry} type="button">{entry}</button>
                ))}
            </nav>

            <main className="flex shrink-0">
                <aside className="flex w-[766px] shrink-0 flex-col">
                    <Toolbar />
                    <MasterPanel />
                    <Splitter />
                    <TrackPanel />
                    <div className="mr-2 flex flex-1 flex-col border-b border-[#6a6a6a]">
                        <button type="button" aria-label="Add track" className="ml-[356px] mt-[42px] self-start">
                            <svg width="42" height="42" viewBox="0 0 42 42" fill="none" stroke="#8e9492">
                                <circle cx="21" cy="21" r="19" strokeWidth="2.5" />
                                <path d="M21 10v22M10 21h22" strokeWidth="3" />
                            </svg>
                        </button>
                    </div>
                    <div className="-ml-1 h-[27px] text-[16px] leading-[30px] text-[#8a8a8a]">Track 1 [input] Input 1</div>
                </aside>
                <Arrange />
            </main>

            <Transport />

            <section className="flex min-h-0 flex-1 flex-col bg-[#a8afae]">
                <input
                    aria-label="Filter regions"
                    className="mb-[14px] ml-[10px] mt-[22px] h-[36px] shrink-0 border-2 border-r-0 border-white border-b-[#8a8f8e] bg-[#dddfde] px-2 outline-none"
                />
                <RegionTable />
            </section>
        </div>
    );
}
